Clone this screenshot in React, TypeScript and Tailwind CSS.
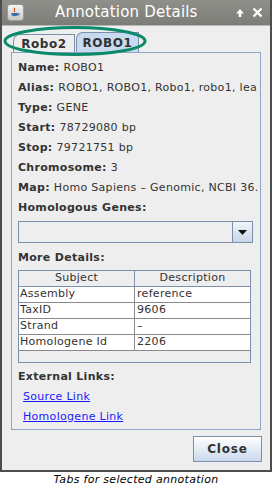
import React from 'react';

const rows: [string, string][] = [
  ['Name:', 'ROBO1'],
  ['Alias:', 'ROBO1, ROBO1, Robo1, robo1, lea'],
  ['Type:', 'GENE'],
  ['Start:', '78729080 bp'],
  ['Stop:', '79721751 bp'],
  ['Chromosome:', '3'],
  ['Map:', 'Homo Sapiens – Genomic, NCBI 36.'],
];

const details: [string, string][] = [
  ['Assembly', 'reference'],
  ['TaxID', '9606'],
  ['Strand', '–'],
  ['Homologene Id', '2206'],
];

function JavaIcon() {
  return (
    <div className="w-[17px] h-[17px] rounded-[3px] border border-[#9a9a9a] bg-gradient-to-b from-[#f4f4f4] to-[#c8c8c8] flex items-center justify-center">
      <svg width="11" height="11" viewBox="0 0 11 11">
        <path d="M4 1 C6 3 3 4 5 5" stroke="#d8541c" strokeWidth="1.2" fill="none" />
        <path d="M1.5 6 H8 V8 C8 9.5 1.5 9.5 1.5 8 Z" fill="#3b6ea8" />
        <path d="M8 6.5 C10 6.5 10 8 8 8" stroke="#3b6ea8" strokeWidth="0.9" fill="none" />
      </svg>
    </div>
  );
}

export default function App() {
  return (
    <div className="w-[272px] h-[488px] bg-white flex flex-col" style={{ fontFamily: '"DejaVu Sans", sans-serif' }}>
      <div className="h-[472px] flex flex-col border-x-2 border-b-2 border-[#4d4d4d] bg-[#eeeeee]">
        {/* title bar */}
        <div className="h-[26px] shrink-0 flex items-center px-[5px] bg-gradient-to-b from-[#8f908a] to-[#7c7d77] border-b border-[#b8b8b4]">
          <JavaIcon />
          <div className="flex-1 text-white text-[15px] leading-none pl-[31px] tracking-[0.2px]">Annotation Details</div>
          <div className="flex items-center gap-[7px] mr-[2px]">
            <svg width="10" height="10" viewBox="0 0 10 10">
              <path d="M5 1 L9 5.5 H6.3 V9 H3.7 V5.5 H1 Z" fill="white" />
            </svg>
            <svg width="11" height="11" viewBox="0 0 11 11">
              <path d="M1.5 1.5 L9.5 9.5 M9.5 1.5 L1.5 9.5" stroke="white" strokeWidth="2.4" />
            </svg>
          </div>
        </div>

        {/* body */}
        <div className="flex-1 flex flex-col px-[9px] pt-[6px]">
          {/* tabs */}
          <div className="relative h-[20px] flex items-end pl-[2px] text-[12px] font-bold text-[#333]">
            <div className="h-[18px] w-[62px] flex items-center justify-center rounded-tl-[7px] border border-b-0 border-[#7d8fab] bg-[#eeeeee] tracking-[0.6px]">Robo2</div>
            <div className="h-[20px] w-[63px] ml-[1px] flex items-center justify-center rounded-tl-[7px] border border-b-0 border-[#7d8fab] bg-[#c8daef] tracking-[0.6px]">ROBO1</div>
            <svg className="absolute left-[-8px] top-[-7px]" width="146" height="32" viewBox="0 0 146 32">
              <ellipse cx="72" cy="16" rx="70" ry="13.5" fill="none" stroke="#0a8a69" strokeWidth="3" />
            </svg>
          </div>

          {/* panel */}
          <div className="h-[378px] border border-[#8ea5c8] flex flex-col px-[6px] pt-[5px] text-[11px] text-[#333] tracking-[0.3px] overflow-hidden">
            {rows.map(([k, v]) => (
              <div key={k} className="h-[20px] shrink-0 flex items-center whitespace-nowrap">
                <span className="font-bold">{k}</span>
                <span className="ml-[4px]">{v}</span>
              </div>
            ))}
            <div className="h-[20px] shrink-0 flex items-center font-bold">Homologous Genes:</div>
            <div className="mt-[3px] h-[22px] w-[235px] shrink-0 flex border border-[#7d8fab] bg-[#eeeeee]">
              <div className="flex-1" />
              <div className="w-[20px] border-l border-[#7d8fab] bg-gradient-to-b from-[#f2f6fb] to-[#c6d6ea] flex items-center justify-center">
                <svg width="9" height="5" viewBox="0 0 9 5">
                  <path d="M0 0 H9 L4.5 5 Z" fill="#111" />
                </svg>
              </div>
            </div>
            <div className="mt-[5px] h-[20px] shrink-0 flex items-center font-bold">More Details:</div>
            <div className="mt-[2px] h-[93px] w-[233px] shrink-0 border border-[#7d8fab] bg-[#eeeeee] flex flex-col">
              <div className="h-[16px] flex border-b border-[#7d8fab]">
                <div className="w-[116px] border-r border-[#7d8fab] flex items-center justify-center">Subject</div>
                <div className="flex-1 flex items-center justify-center">Description</div>
              </div>
              {details.map(([a, b]) => (
                <div key={a} className="h-[16px] flex bg-white border-b border-[#8a8a8a]">
                  <div className="w-[116px] border-r border-[#8a8a8a] flex items-center pl-[1px]">{a}</div>
                  <div className="flex-1 flex items-center pl-[2px]">{b}</div>
                </div>
              ))}
            </div>
            <div className="mt-[4px] h-[20px] shrink-0 flex items-center font-bold">External Links:</div>
            <div className="h-[20px] shrink-0 flex items-center pl-[5px]">
              <span className="text-[#1a1aff] underline">Source Link</span>
            </div>
            <div className="h-[20px] shrink-0 flex items-center pl-[5px]">
              <span className="text-[#1a1aff] underline">Homologene Link</span>
            </div>
          </div>

          {/* close */}
          <div className="flex justify-end mt-[6px] mr-[-1px]">
            <div className="h-[26px] w-[69px] border border-[#7d8fab] bg-gradient-to-b from-[#ffffff] to-[#c9d9ec] flex items-center justify-center text-[12px] font-bold text-[#333] tracking-[0.8px]">Close</div>
          </div>
        </div>
      </div>
      <div className="flex-1 flex items-center justify-center text-[11px] italic text-black tracking-[0.3px]">Tabs for selected annotation</div>
    </div>
  );
}
